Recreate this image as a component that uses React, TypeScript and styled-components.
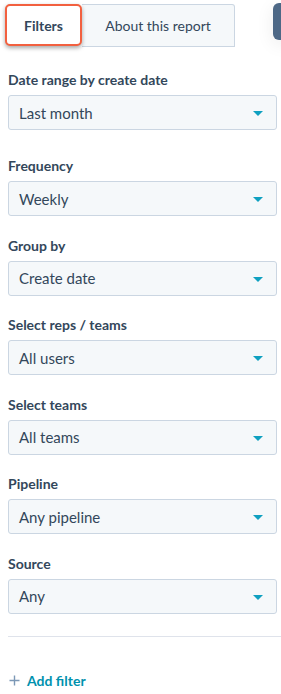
import React from "react";
import styled, { createGlobalStyle } from "styled-components";

const GlobalStyle = createGlobalStyle`
  html, body {
    margin: 0;
    padding: 0;
    background: #ffffff;
  }

  body {
    font-family: "Lato", "Open Sans", sans-serif;
    color: #33475b;
    overflow: hidden;
  }
`;

const Panel = styled.div`
  position: relative;
  width: 281px;
  height: 694px;
  overflow: hidden;
  background: #ffffff;
`;

const TabBar = styled.div`
  display: flex;
  align-items: flex-start;
  padding: 4px 0 0 5px;
  height: 43px;
`;

const Tab = styled.button<{ $active?: boolean }>`
  box-sizing: border-box;
  flex-shrink: 0;
  white-space: nowrap;
  width: ${(p) => (p.$active ? "77px" : "153px")};
  height: ${(p) => (p.$active ? "42px" : "43px")};
  font-family: inherit;
  font-size: 14px;
  font-weight: ${(p) => (p.$active ? 700 : 400)};
  color: #33475b;
  cursor: pointer;
  padding: 0;
  text-align: center;
  background: ${(p) => (p.$active ? "#ffffff" : "#f5f8fa")};
  border: ${(p) => (p.$active ? "2px solid #f2603f" : "1px solid #cbd6e2")};
  border-left-width: ${(p) => (p.$active ? "2px" : "0")};
  border-radius: ${(p) => (p.$active ? "5px" : "0 3px 0 0")};
  box-shadow: ${(p) => (p.$active ? "0 2px 4px rgba(0, 0, 0, 0.35)" : "none")};
  position: relative;
  z-index: ${(p) => (p.$active ? 1 : 0)};
`;

const SideHandle = styled.div`
  margin-left: 38px;
  margin-top: -1px;
  width: 20px;
  height: 37px;
  border-radius: 6px;
  background: #4d6886;
  box-shadow: 0 4px 18px rgba(0, 0, 0, 0.08);
  flex-shrink: 0;
`;

const Form = styled.div`
  padding: 23px 4px 0 8px;
`;

const Field = styled.div<{ $spaced?: boolean }>`
  margin-bottom: ${(p) => (p.$spaced ? "26px" : "19.5px")};
`;

const Label = styled.div`
  font-size: 14px;
  font-weight: 700;
  line-height: 20px;
  margin-bottom: 5px;
  color: #33475b;
`;

const Select = styled.div`
  box-sizing: border-box;
  height: 35px;
  display: flex;
  align-items: center;
  justify-content: space-between;
  padding: 0 13px 0 10px;
  background: #f5f8fa;
  border: 1px solid #cbd6e2;
  border-radius: 3px;
  font-size: 15px;
  color: #33475b;
`;

const Caret = styled.span`
  width: 0;
  height: 0;
  border-left: 5px solid transparent;
  border-right: 5px solid transparent;
  border-top: 5px solid #0fa0c0;
  margin-top: 2px;
`;

const Divider = styled.div`
  margin: 22.5px -4px 0 0;
  border-top: 1px solid #dfe3eb;
`;

const AddFilter = styled.button`
  display: flex;
  align-items: center;
  gap: 7px;
  margin-top: 33px;
  padding: 0 0 0 1px;
  height: 20px;
  background: none;
  border: none;
  font-family: inherit;
  font-size: 14px;
  font-weight: 700;
  color: #0091ae;
  cursor: pointer;
`;

const filters = [
  { label: "Date range by create date", value: "Last month" },
  { label: "Frequency", value: "Weekly" },
  { label: "Group by", value: "Create date" },
  { label: "Select reps / teams", value: "All users" },
  { label: "Select teams", value: "All teams" },
  { label: "Pipeline", value: "Any pipeline" },
  { label: "Source", value: "Any" },
];

export default function App() {
  return (
    <Panel>
      <GlobalStyle />
      <TabBar>
        <Tab $active>Filters</Tab>
        <Tab>About this report</Tab>
        <SideHandle />
      </TabBar>
      <Form>
        {filters.map((f, i) => (
          <Field key={f.label} $spaced={i === 0}>
            <Label>{f.label}</Label>
            <Select>
              {f.value}
              <Caret />
            </Select>
          </Field>
        ))}
        <Divider />
        <AddFilter>
          <svg width="11" height="11" viewBox="0 0 11 11">
            <path d="M5.5 0.5v10M0.5 5.5h10" stroke="#7c98b6" strokeWidth="1.4" />
          </svg>
          Add filter
        </AddFilter>
      </Form>
    </Panel>
  );
}
